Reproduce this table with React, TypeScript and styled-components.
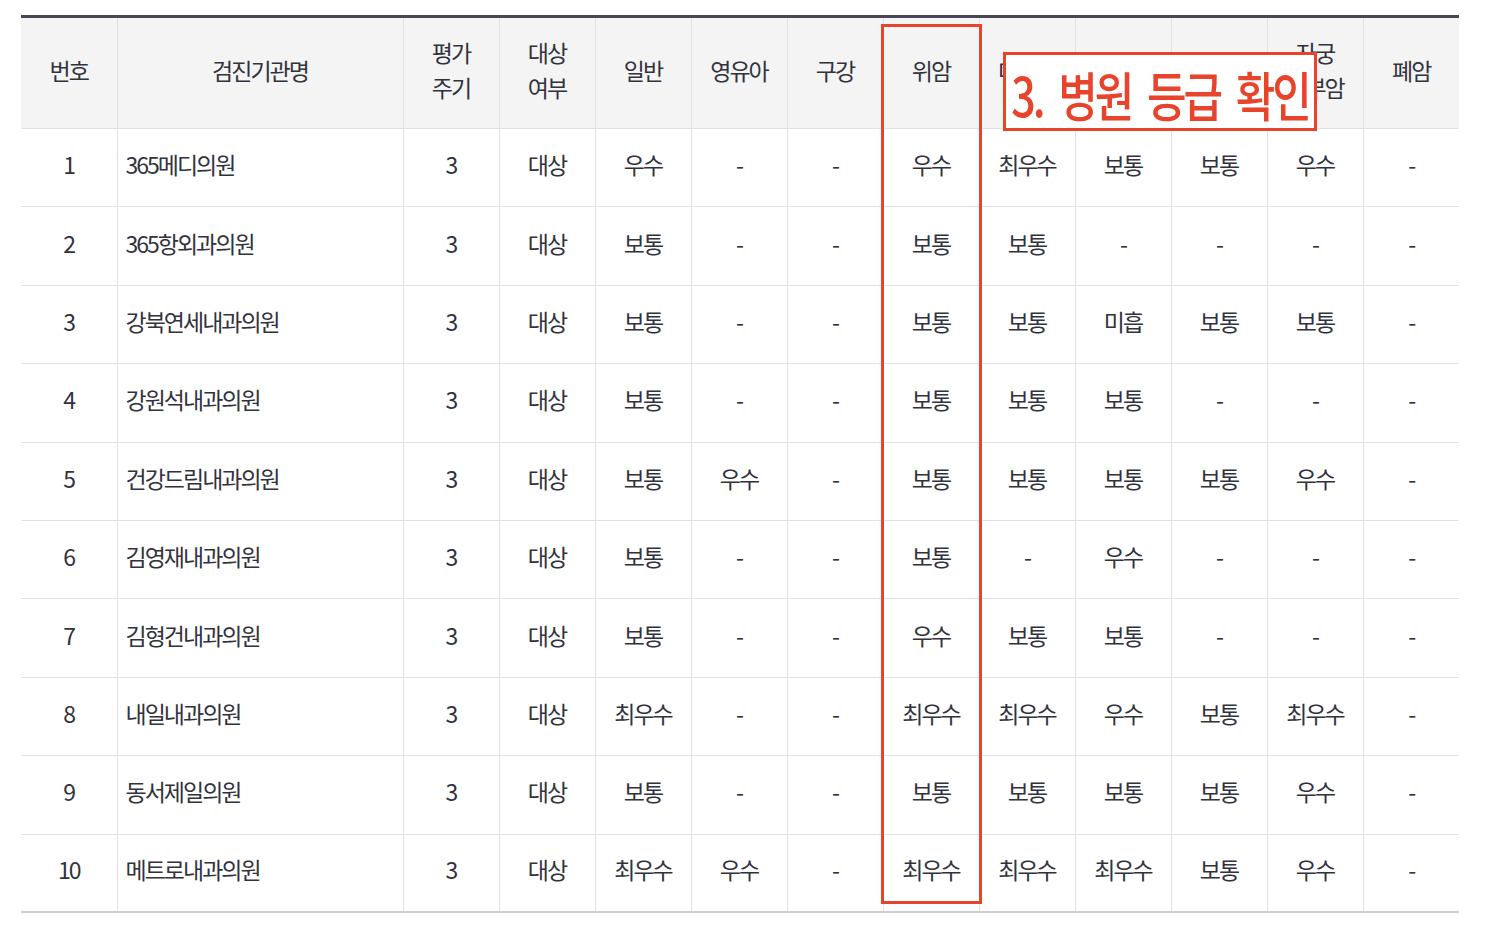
import React from "react";
import styled, { createGlobalStyle } from "styled-components";

const Global = createGlobalStyle`
  html, body { margin: 0; padding: 0; background: #ffffff; }
  body { font-family: "Noto Sans CJK KR", "Noto Sans", sans-serif; }
`;

const Page = styled.div`
  padding: 15px 0 0 21px;
`;

const Frame = styled.div`
  position: relative;
  width: 1438px;
`;

const Table = styled.table`
  width: 1438px;
  table-layout: fixed;
  border-collapse: collapse;
  border-top: 3px solid #474757;
  border-bottom: 2px solid #cbcbd0;
  color: #32323d;
  font-family: "Noto Sans CJK KR", "Noto Sans", sans-serif;
  font-size: 23px;
  letter-spacing: -2px;
`;

const HeadRow = styled.tr`
  height: 112px;
  background: #f4f4f4;
`;

const BodyRow = styled.tr`
  height: 78.4px;
`;

const HeadCell = styled.th`
  font-weight: 400;
  line-height: 35px;
  padding: 0 0 6px;
  text-align: center;
  vertical-align: middle;
  border-left: 1px solid #e2e2e4;
  border-bottom: 1px solid #e2e2e4;
  &:first-child { border-left: none; }
`;

const Cell = styled.td<{ $left?: boolean }>`
  padding: 0 0 7px ${(p) => (p.$left ? "8px" : "0")};
  text-align: ${(p) => (p.$left ? "left" : "center")};
  vertical-align: middle;
  line-height: 30px;
  border-left: 1px solid #e2e2e4;
  border-top: 1px solid #e2e2e4;
  white-space: nowrap;
  &:first-child { border-left: none; }
`;

const ColumnMark = styled.div`
  position: absolute;
  left: 860px;
  top: 9px;
  width: 101px;
  height: 880px;
  box-sizing: border-box;
  border: 3px solid #e8432b;
  pointer-events: none;
`;

const Note = styled.div`
  position: absolute;
  left: 982px;
  top: 37px;
  width: 314px;
  height: 79px;
  box-sizing: border-box;
  border: 3px solid #e8432b;
  background: #ffffff;
  display: flex;
  align-items: center;
  justify-content: center;
  overflow: hidden;
`;

const NoteText = styled.span`
  display: inline-block;
  color: #e8432b;
  font-family: "Noto Sans CJK KR", sans-serif;
  font-weight: 500;
  font-size: 43px;
  letter-spacing: -3px;
  word-spacing: 9px;
  line-height: 1;
  white-space: nowrap;
  transform: scaleY(1.25);
  margin-top: 4px;
`;

const headers: string[][] = [
  ["번호"],
  ["검진기관명"],
  ["평가", "주기"],
  ["대상", "여부"],
  ["일반"],
  ["영유아"],
  ["구강"],
  ["위암"],
  ["대장암"],
  ["간암"],
  ["유방암"],
  ["자궁", "경부암"],
  ["폐암"],
];

const widths = [96, 286, 96, 96, 96, 96, 96, 96, 96, 96, 96, 96, 96];

const rows: string[][] = [
  ["1", "365메디의원", "3", "대상", "우수", "-", "-", "우수", "최우수", "보통", "보통", "우수", "-"],
  ["2", "365항외과의원", "3", "대상", "보통", "-", "-", "보통", "보통", "-", "-", "-", "-"],
  ["3", "강북연세내과의원", "3", "대상", "보통", "-", "-", "보통", "보통", "미흡", "보통", "보통", "-"],
  ["4", "강원석내과의원", "3", "대상", "보통", "-", "-", "보통", "보통", "보통", "-", "-", "-"],
  ["5", "건강드림내과의원", "3", "대상", "보통", "우수", "-", "보통", "보통", "보통", "보통", "우수", "-"],
  ["6", "김영재내과의원", "3", "대상", "보통", "-", "-", "보통", "-", "우수", "-", "-", "-"],
  ["7", "김형건내과의원", "3", "대상", "보통", "-", "-", "우수", "보통", "보통", "-", "-", "-"],
  ["8", "내일내과의원", "3", "대상", "최우수", "-", "-", "최우수", "최우수", "우수", "보통", "최우수", "-"],
  ["9", "동서제일의원", "3", "대상", "보통", "-", "-", "보통", "보통", "보통", "보통", "우수", "-"],
  ["10", "메트로내과의원", "3", "대상", "최우수", "우수", "-", "최우수", "최우수", "최우수", "보통", "우수", "-"],
];

export default function App() {
  return (
    <Page>
      <Global />
      <Frame>
        <Table>
          <colgroup>
            {widths.map((w, i) => (
              <col key={i} style={{ width: w }} />
            ))}
          </colgroup>
          <thead>
            <HeadRow>
              {headers.map((h, i) => (
                <HeadCell key={i}>
                  {h.map((line, j) => (
                    <React.Fragment key={j}>
                      {j > 0 && <br />}
                      {line}
                    </React.Fragment>
                  ))}
                </HeadCell>
              ))}
            </HeadRow>
          </thead>
          <tbody>
            {rows.map((r, i) => (
              <BodyRow key={i}>
                {r.map((v, j) => (
                  <Cell key={j} $left={j === 1}>
                    {v}
                  </Cell>
                ))}
              </BodyRow>
            ))}
          </tbody>
        </Table>
        <ColumnMark />
        <Note>
          <NoteText>3. 병원 등급 확인</NoteText>
        </Note>
      </Frame>
    </Page>
  );
}
